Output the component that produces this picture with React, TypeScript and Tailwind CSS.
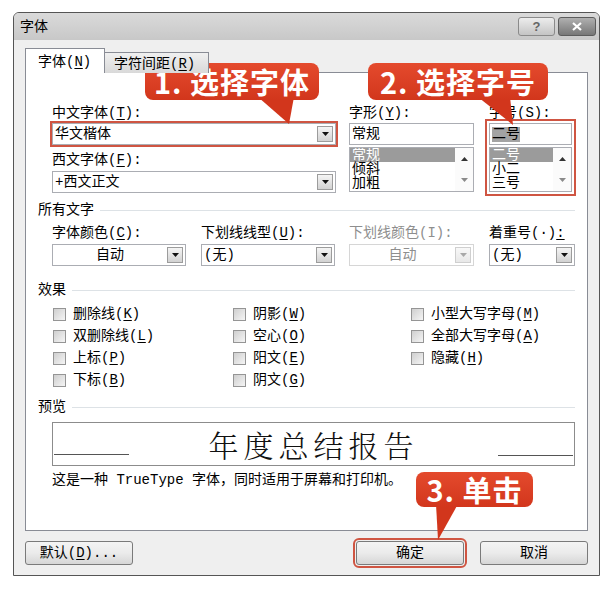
import React from "react";

const U = ({ c }: { c: string }) => (
  <span className="underline underline-offset-[2px] decoration-1">{c}</span>
);

function Arrow({ disabled = false }: { disabled?: boolean }) {
  return (
    <div
      className={
        disabled
          ? "w-[16px] h-[16px] border border-[#cfcfcf] bg-linear-to-b from-[#f8f8f8] to-[#e8e8e8] flex items-center justify-center"
          : "w-[16px] h-[16px] border border-[#9c9c9c] bg-linear-to-b from-[#f5f5f5] to-[#d2d2d2] flex items-center justify-center"
      }
    >
      <svg width="7" height="4" viewBox="0 0 7 4">
        <polygon points="0,0 7,0 3.5,4" fill={disabled ? "#a8a8a8" : "#111"} />
      </svg>
    </div>
  );
}

function Select({
  text,
  center = false,
  disabled = false,
  cls,
}: {
  text: string;
  center?: boolean;
  disabled?: boolean;
  cls: string;
}) {
  return (
    <div
      className={`${cls} h-[22px] border bg-white flex items-center pr-[2px] ${
        disabled ? "border-[#d6d6d6] text-[#8e8e8e]" : "border-[#abadb3] text-black"
      }`}
    >
      <div className={center ? "flex-1 text-center" : "flex-1 pl-[2px]"}>{text}</div>
      <Arrow disabled={disabled} />
    </div>
  );
}

function List({ items }: { items: string[] }) {
  return (
    <div className="h-[45px] border border-[#abadb3] bg-white flex">
      <div className="flex-1 leading-[14px] overflow-hidden">
        {items.map((t, i) => (
          <div
            key={t}
            className={i === 0 ? "h-[14px] pl-[2px] bg-[#9b9b9b] text-white" : "h-[14px] pl-[2px]"}
          >
            {t}
          </div>
        ))}
      </div>
      <div className="w-[18px] bg-[#fbfbfb] flex flex-col items-center justify-between pt-[9px] pb-[9px]">
        <svg width="7" height="4" viewBox="0 0 7 4">
          <polygon points="3.5,0 7,4 0,4" fill="#333" />
        </svg>
        <svg width="7" height="4" viewBox="0 0 7 4">
          <polygon points="0,0 7,0 3.5,4" fill="#8a8a8a" />
        </svg>
      </div>
    </div>
  );
}

function Heading({ children }: { children: React.ReactNode }) {
  return (
    <div className="flex items-center h-[16px]">
      <span>{children}</span>
      <div className="flex-1 h-px bg-[#dde2e6] ml-[6px]" />
    </div>
  );
}

function Check({ children }: { children: React.ReactNode }) {
  return (
    <div className="flex items-center h-[22px]">
      <div className="ml-[1px] w-[13px] h-[13px] border border-[#959595] bg-linear-to-br from-[#cfcfcf] to-[#f5f5f5]" />
      <span className="ml-[7px]">{children}</span>
    </div>
  );
}

function Btn({ children, cls = "" }: { children: React.ReactNode; cls?: string }) {
  return (
    <div
      className={`${cls} w-[108px] h-[24px] border border-[#7a7a7a] rounded-[3px] bg-linear-to-b from-[#f4f4f4] via-[#ebebeb] to-[#d6d6d6] flex items-center justify-center`}
    >
      {children}
    </div>
  );
}

export default function App() {
  return (
    <div className="relative w-[612px] h-[589px] bg-white overflow-hidden pt-[12px] pl-[13px] font-['Liberation_Mono','Noto_Sans_CJK_SC',monospace] text-[14px] leading-[16px] text-black">
      <div className="w-[587px] h-[564px] border border-[#555] rounded-t-[6px] bg-[#efefef] flex flex-col overflow-hidden">
        {/* title bar */}
        <div className="h-[27px] bg-linear-to-b from-[#dadada] to-[#c8c8c8] flex justify-between pl-[6px] pr-[3px]">
          <div className="flex items-center h-[27px]">字体</div>
          <div className="flex gap-[3px] pt-[4px]">
            <div className="w-[37px] h-[19px] border border-[#8a8a8a] rounded-[3px] bg-linear-to-b from-[#ededed] to-[#c4c4c4] flex items-center justify-center text-[#666] font-bold text-[13px] font-['Liberation_Sans',sans-serif]">
              ?
            </div>
            <div className="w-[38px] h-[19px] border border-[#5c5c5c] rounded-[3px] bg-linear-to-b from-[#b0b0b0] to-[#777] flex items-center justify-center">
              <svg width="10" height="9" viewBox="0 0 10 9">
                <path d="M1 1 L9 8 M9 1 L1 8" stroke="#fff" strokeWidth="2.2" />
              </svg>
            </div>
          </div>
        </div>

        {/* body */}
        <div className="flex-1 pl-[11px] pt-[8px]">
          <div className="relative z-10 flex items-end h-[25px]">
            <div className="w-[80px] h-[25px] bg-white border border-b-0 border-[#898c95] pl-[12px] pt-[5px]">
              字体(<U c="N" />)
            </div>
            <div className="w-[104px] h-[21px] border border-l-0 border-b-0 border-[#898c95] bg-linear-to-b from-[#f0f0f0] to-[#d9d9d9] pl-[9px] pt-[3px]">
              字符间距(<U c="R" />)
            </div>
          </div>

          <div className="-mt-px w-[563px] h-[459px] border border-[#898c95] bg-white pl-[12px] pr-[12px] pt-[32px]">
            {/* fonts row */}
            <div className="flex ml-[14px]">
              <div className="w-[284px]">
                <div className="h-[16px]">
                  中文字体(<U c="T" />):
                </div>
                <div className="mt-[2px] h-[22px] border border-[#abadb3] outline-2 outline-[#cf5542] bg-white flex items-center pr-[2px]">
                  <div className="flex-1 pl-[2px]">华文楷体</div>
                  <Arrow />
                </div>
                <div className="mt-[7px] h-[16px]">
                  西文字体(<U c="F" />):
                </div>
                <Select cls="mt-[3px] w-[284px]" text="+西文正文" />
              </div>
              <div className="w-[125px] ml-[13px]">
                <div className="h-[16px]">
                  字形(<U c="Y" />):
                </div>
                <div className="mt-[2px] h-[22px] border border-[#abadb3] bg-white flex items-center pl-[2px]">
                  常规
                </div>
                <div className="mt-[2px]">
                  <List items={["常规", "倾斜", "加粗"]} />
                </div>
              </div>
              <div className="w-[83px] ml-[15px]">
                <div className="h-[16px]">
                  字号(<U c="S" />):
                </div>
                <div className="mt-[2px] outline-2 outline-offset-[2px] outline-[#cf5542]">
                  <div className="h-[22px] border border-[#abadb3] bg-white flex items-center pl-[2px]">
                    <span className="bg-[#a3a3a3] leading-[15px]">二号</span>
                  </div>
                  <div className="mt-[2px]">
                    <List items={["二号", "小二", "三号"]} />
                  </div>
                </div>
              </div>
            </div>

            {/* all text */}
            <div className="mt-[9px]">
              <Heading>所有文字</Heading>
            </div>
            <div className="flex ml-[14px] mt-[7px]">
              <div className="w-[134px]">
                <div className="h-[16px]">
                  字体颜色(<U c="C" />):
                </div>
                <Select cls="mt-[3px] w-[134px]" text="自动" center />
              </div>
              <div className="w-[134px] ml-[15px]">
                <div className="h-[16px]">
                  下划线线型(<U c="U" />):
                </div>
                <Select cls="mt-[3px] w-[134px]" text="(无)" />
              </div>
              <div className="w-[125px] ml-[14px]">
                <div className="h-[16px] text-[#8e8e8e]">下划线颜色(I):</div>
                <Select cls="mt-[3px] w-[125px]" text="自动" center disabled />
              </div>
              <div className="w-[86px] ml-[15px]">
                <div className="h-[16px]">
                  着重号(·)<U c=":" />
                </div>
                <Select cls="mt-[3px] w-[86px]" text="(无)" />
              </div>
            </div>

            {/* effects */}
            <div className="mt-[16px]">
              <Heading>效果</Heading>
            </div>
            <div className="flex ml-[14px] mt-[5px]">
              <div className="w-[180px]">
                <Check>
                  删除线(<U c="K" />)
                </Check>
                <Check>
                  双删除线(<U c="L" />)
                </Check>
                <Check>
                  上标(<U c="P" />)
                </Check>
                <Check>
                  下标(<U c="B" />)
                </Check>
              </div>
              <div className="w-[178px]">
                <Check>
                  阴影(<U c="W" />)
                </Check>
                <Check>
                  空心(<U c="O" />)
                </Check>
                <Check>
                  阳文(<U c="E" />)
                </Check>
                <Check>
                  阴文(<U c="G" />)
                </Check>
              </div>
              <div>
                <Check>
                  小型大写字母(<U c="M" />)
                </Check>
                <Check>
                  全部大写字母(<U c="A" />)
                </Check>
                <Check>
                  隐藏(<U c="H" />)
                </Check>
              </div>
            </div>

            {/* preview */}
            <div className="mt-[8px]">
              <Heading>预览</Heading>
            </div>
            <div className="ml-[14px] mt-[7px] h-[44px] border border-[#8c8c8c] flex items-center relative">
              <div className="absolute left-[1px] top-[31px] w-[75px] h-px bg-[#555]" />
              <div className="absolute right-[1px] top-[32px] w-[75px] h-px bg-[#555]" />
              <div className="flex-1 text-center text-[30px] leading-[36px] tracking-[5px] font-light font-['AR_PL_UKai_CN','Noto_Serif_CJK_SC','Noto_Sans_CJK_SC',serif] text-[#111]">
                年度总结报告
              </div>
            </div>
            <div className="ml-[14px] mt-[6px] h-[16px]">
              这是一种 TrueType 字体，同时适用于屏幕和打印机。
            </div>
          </div>

          {/* buttons */}
          <div className="flex mt-[10px] w-[563px]">
            <Btn>
              默认(<U c="D" />)...
            </Btn>
            <div className="flex-1" />
            <Btn cls="outline-2 outline-offset-[1px] outline-[#cf5542]">确定</Btn>
            <Btn cls="ml-[16px]">取消</Btn>
          </div>
        </div>
      </div>

      {/* callouts */}
      <svg className="absolute left-0 top-0 pointer-events-none" width="612" height="589">
        <polygon points="258,97 294,97 289,124" fill="#d2361c" />
        <polygon points="478,97 510,97 513,125" fill="#d2361c" />
        <polygon points="436,504 458,504 438,540" fill="#d2361c" />
      </svg>
      <div className="absolute left-[145px] top-[63px] w-[174px] h-[37px] rounded-[8px] bg-linear-to-b from-[#e44a2d] to-[#d2361c] text-white font-bold text-[29px] tracking-[1px] leading-[37px] text-center font-['Noto_Sans_CJK_SC',sans-serif]">
        1. 选择字体
      </div>
      <div className="absolute left-[368px] top-[63px] w-[180px] h-[37px] rounded-[8px] bg-linear-to-b from-[#e44a2d] to-[#d2361c] text-white font-bold text-[29px] tracking-[1px] leading-[37px] text-center font-['Noto_Sans_CJK_SC',sans-serif]">
        2. 选择字号
      </div>
      <div className="absolute left-[416px] top-[472px] w-[117px] h-[35px] rounded-[8px] bg-linear-to-b from-[#e44a2d] to-[#d2361c] text-white font-bold text-[29px] tracking-[1px] leading-[35px] text-center font-['Noto_Sans_CJK_SC',sans-serif]">
        3. 单击
      </div>
    </div>
  );
}
